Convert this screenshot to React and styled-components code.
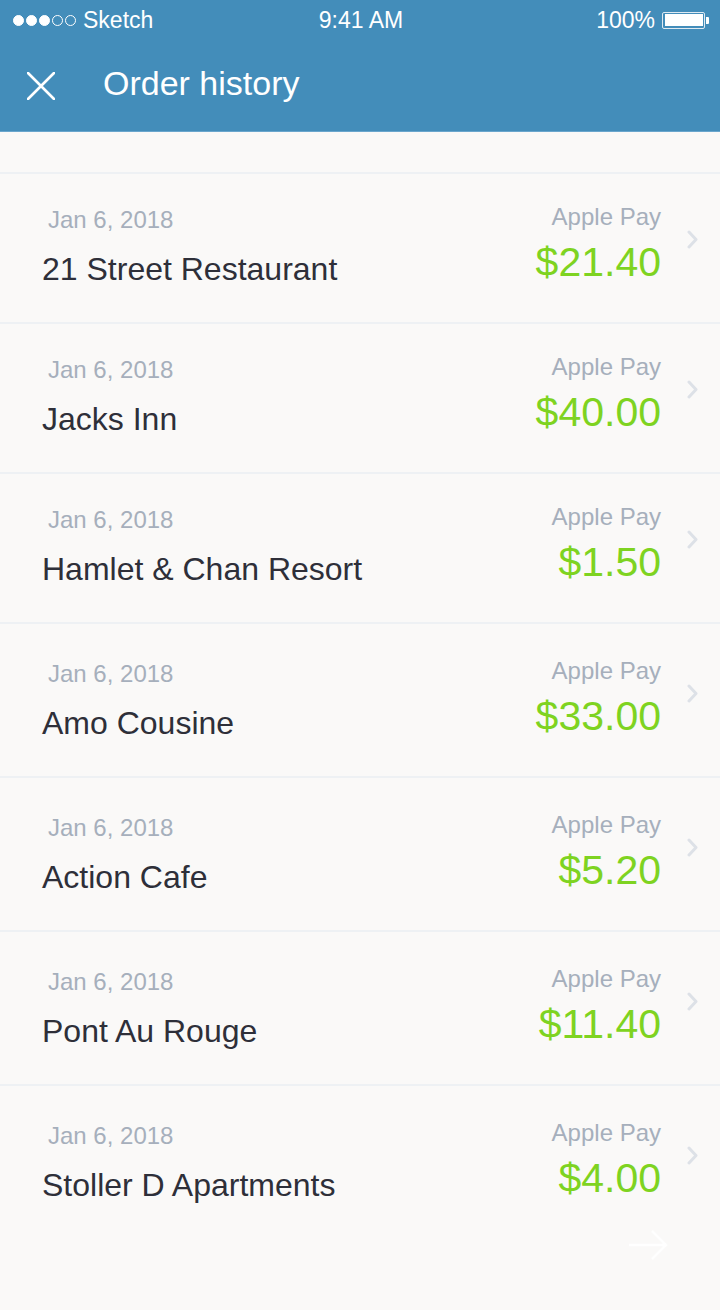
import React from "react";
import styled, { createGlobalStyle } from "styled-components";

const GlobalStyle = createGlobalStyle`
  * { box-sizing: border-box; }
  body {
    margin: 0;
    background: #faf9f8;
    font-family: "Liberation Sans", Arial, sans-serif;
  }
`;

const Page = styled.div`
  position: relative;
  width: 720px;
  min-height: 1310px;
  background: #faf9f8;
  overflow: hidden;
`;

const Header = styled.header`
  background: #438dba;
  border-bottom: 1px solid #6aa6cd;
  color: #fff;
`;

const StatusBar = styled.div`
  height: 40px;
  display: grid;
  grid-template-columns: 1fr auto 1fr;
  align-items: center;
  padding: 0 11px 0 13px;
  font-size: 23px;
  line-height: 40px;
`;

const Carrier = styled.div`
  display: flex;
  align-items: center;
`;

const Dot = styled.span`
  width: 11px;
  height: 11px;
  border-radius: 50%;
  margin-right: 2px;
  border: 1.5px solid #fff;
  background: ${(p) => (p.filled ? "#fff" : "transparent")};
`;

const CarrierName = styled.span`
  margin-left: 5px;
`;

const Time = styled.div`
  text-align: center;
`;

const Battery = styled.div`
  display: flex;
  align-items: center;
  justify-content: flex-end;
  gap: 7px;
`;

const BatteryBody = styled.span`
  width: 43px;
  height: 17px;
  border: 1.5px solid #dfeaf2;
  border-radius: 2px;
  padding: 1.5px;
  display: flex;

  &::before {
    content: "";
    flex: 1;
    background: #fff;
  }
`;

const BatteryNub = styled.span`
  width: 3px;
  height: 7px;
  margin-left: -6px;
  background: #fff;
  border-radius: 0 1px 1px 0;
`;

const NavBar = styled.div`
  height: 91px;
  display: flex;
  align-items: center;
  padding-left: 27px;
`;

const Title = styled.h1`
  margin: 0 0 6px 48px;
  font-size: 34px;
  line-height: 36px;
  font-weight: 400;
`;

const Spacer = styled.div`
  height: 40px;
`;

const Row = styled.div`
  height: ${(p) => (p.tall ? 154 : 150)}px;
  border-top: 2px solid #eef1f4;
  display: flex;
  align-items: flex-start;
  padding: ${(p) => (p.tall ? 33 : 29)}px 22px 0 42px;
`;

const Left = styled.div`
  flex: 1;
  margin-top: 3px;
`;

const DateText = styled.div`
  margin-left: 6px;
  font-size: 24px;
  line-height: 28px;
  color: #a6afbc;
`;

const Name = styled.div`
  margin-top: 16px;
  font-size: 32px;
  line-height: 38px;
  color: #2e2f39;
`;

const Right = styled.div`
  text-align: right;
`;

const Method = styled.div`
  font-size: 24px;
  line-height: 28px;
  color: #a6afbc;
`;

const Amount = styled.div`
  margin-top: 8px;
  font-size: 41px;
  line-height: 46px;
  color: #7ed321;
`;

const Chevron = styled.svg`
  margin: 27px 0 0 26px;
  flex-shrink: 0;
`;

const NextButton = styled.svg`
  position: absolute;
  right: 52px;
  top: 1229px;
`;

const orders = [
  { name: "21 Street Restaurant", amount: "$21.40" },
  { name: "Jacks Inn", amount: "$40.00" },
  { name: "Hamlet & Chan Resort", amount: "$1.50" },
  { name: "Amo Cousine", amount: "$33.00", tall: true },
  { name: "Action Cafe", amount: "$5.20", tall: true },
  { name: "Pont Au Rouge", amount: "$11.40", tall: true },
  { name: "Stoller D Apartments", amount: "$4.00", tall: true },
];

export default function App() {
  return (
    <Page>
      <GlobalStyle />
      <Header>
        <StatusBar>
          <Carrier>
            <Dot filled />
            <Dot filled />
            <Dot filled />
            <Dot />
            <Dot />
            <CarrierName>Sketch</CarrierName>
          </Carrier>
          <Time>9:41 AM</Time>
          <Battery>
            <span>100%</span>
            <BatteryBody />
            <BatteryNub />
          </Battery>
        </StatusBar>
        <NavBar>
          <svg width="28" height="28" viewBox="0 0 28 28">
            <path d="M1 1 L27 27 M27 1 L1 27" stroke="#fff" strokeWidth="2.6" strokeLinecap="round" fill="none" />
          </svg>
          <Title>Order history</Title>
        </NavBar>
      </Header>
      <Spacer />
      {orders.map((o) => (
        <Row key={o.name} tall={o.tall}>
          <Left>
            <DateText>Jan 6, 2018</DateText>
            <Name>{o.name}</Name>
          </Left>
          <Right>
            <Method>Apple Pay</Method>
            <Amount>{o.amount}</Amount>
          </Right>
          <Chevron width="11" height="19" viewBox="0 0 11 19">
            <path d="M2 2 L9 9.5 L2 17" stroke="#dde1e7" strokeWidth="3" fill="none" strokeLinecap="round" strokeLinejoin="round" />
          </Chevron>
        </Row>
      ))}
      <NextButton width="40" height="32" viewBox="0 0 40 32">
        <path d="M1 16 L38 16 M24 2 L38 16 L24 30" stroke="#fff" strokeWidth="2.5" fill="none" />
      </NextButton>
    </Page>
  );
}
